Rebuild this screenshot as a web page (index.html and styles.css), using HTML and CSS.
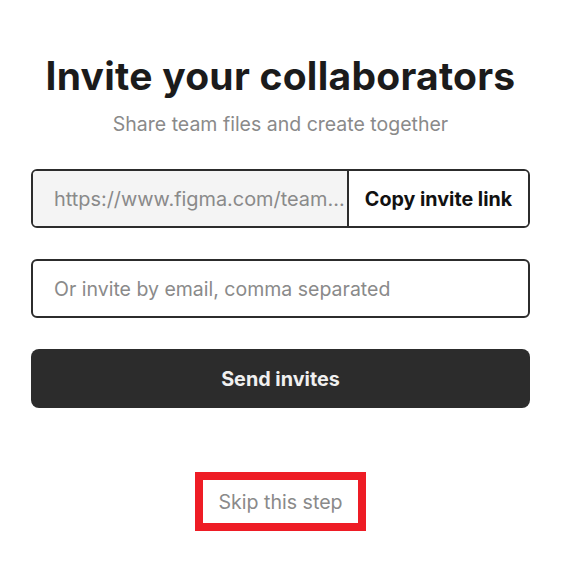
FILE: index.html
```html
<!DOCTYPE html>
<html>
<head>
<meta charset="utf-8">
<link rel="stylesheet" href="styles.css">
</head>
<body>
<main class="invite">
  <h1 class="title">Invite your collaborators</h1>
  <p class="subtitle">Share team files and create together</p>
  <div class="link-row">
    <div class="link-field">https://www.figma.com/team…</div>
    <button class="copy-btn">Copy invite link</button>
  </div>
  <div class="email-field">Or invite by email, comma separated</div>
  <button class="send-btn">Send invites</button>
  <div class="skip-wrap">
    <span class="skip">Skip this step</span>
  </div>
</main>
</body>
</html>
```
FILE: styles.css
```css
* { box-sizing: border-box; }
html, body { margin: 0; background: #fff; }
body {
  font-family: Inter, "Liberation Sans", sans-serif;
  color: #1e1e1e;
}
.invite {
  width: 499px;
  margin-left: 31px;
  padding-top: 52px;
  display: flex;
  flex-direction: column;
}
.title {
  margin: 0;
  font-size: 39px;
  line-height: 48px;
  font-weight: 700;
  text-align: center;
  color: #1b1b1b;
  letter-spacing: 0.25px;
}
.subtitle {
  margin: 12px 0 0;
  font-size: 19.5px;
  line-height: 24px;
  text-align: center;
  color: #8a8a8a;
}
.link-row {
  margin-top: 33px;
  height: 59px;
  display: flex;
  border: 2px solid #2c2c2c;
  border-radius: 6px;
  overflow: hidden;
}
.link-field {
  flex: 1;
  background: #f4f4f4;
  display: flex;
  align-items: center;
  padding-left: 21px;
  font-size: 19.9px;
  color: #8a8a8a;
  border-right: 2px solid #2c2c2c;
  white-space: nowrap;
}
.copy-btn {
  width: 179px;
  border: 0;
  background: #fff;
  font-family: inherit;
  font-size: 19.7px;
  font-weight: 700;
  color: #111;
  padding: 0;
}
.email-field {
  margin-top: 31px;
  height: 59px;
  border: 2px solid #2c2c2c;
  border-radius: 6px;
  display: flex;
  align-items: center;
  padding-left: 21px;
  font-size: 19.5px;
  color: #8a8a8a;
}
.send-btn {
  margin-top: 31px;
  height: 59px;
  border: 0;
  border-radius: 8px;
  background: #2c2c2c;
  color: #f0f0f0;
  font-family: inherit;
  font-size: 19.8px;
  font-weight: 700;
}
.skip-wrap {
  margin-top: 64px;
  display: flex;
  justify-content: center;
}
.skip {
  width: 171px;
  height: 59px;
  border: 8px solid #ee1c25;
  display: flex;
  align-items: center;
  justify-content: center;
  font-size: 19.6px;
  color: #8a8a8a;
}
```
